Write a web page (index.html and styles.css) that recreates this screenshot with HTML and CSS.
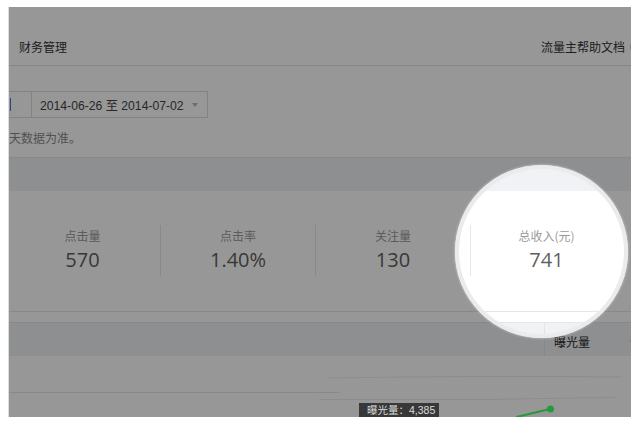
FILE: index.html
```html
<!DOCTYPE html>
<html lang="zh-CN">
<head>
<meta charset="utf-8">
<title>流量主</title>
<link rel="stylesheet" href="styles.css">
</head>
<body>
<div class="frame">
  <div class="page">
    <div class="nav">
      <span class="nav-item">财务管理</span>
      <span class="nav-help">流量主帮助文档<span class="help-icon"></span></span>
    </div>

    <div class="filter">
      <div class="seg seg-prev"><span class="seg-mark"></span></div>
      <div class="seg seg-date"><span class="date-text">2014-06-26 至 2014-07-02</span><span class="caret"></span></div>
    </div>

    <p class="note">天数据为准。</p>

    <div class="band"></div>

    <div class="stats">
      <div class="stat"><div class="stat-label">点击量</div><div class="stat-value">570</div></div>
      <div class="stat"><div class="stat-label">点击率</div><div class="stat-value">1.40%</div></div>
      <div class="stat"><div class="stat-label">关注量</div><div class="stat-value">130</div></div>
      <div class="stat stat-last"><div class="stat-label">总收入(元)</div><div class="stat-value">741</div></div>
    </div>

    <div class="divider"></div>

    <div class="band band-chart">
      <div class="metric"><span>曝光量</span><span class="caret caret-sm"></span></div>
    </div>

    <svg class="chart" width="622" height="61" viewBox="0 0 622 61">
      <line x1="0" y1="36.5" x2="330" y2="36.5" stroke="#e6e6e6" stroke-width="1"/>
      <path d="M318 22 Q470 19.5 612 21" fill="none" stroke="#ececec" stroke-width="1"/>
      <path d="M310 43.5 L480 43.5 Q560 42 606 41.5" fill="none" stroke="#ececec" stroke-width="1"/>
    </svg>

    <div class="lens"></div>

    <div class="tooltip">曝光量：4,385</div>
    <svg class="trend" width="50" height="20" viewBox="0 0 50 20">
      <line x1="7.5" y1="14" x2="41" y2="6" stroke="#27983b" stroke-width="2"/>
      <circle cx="41.5" cy="6" r="3.5" fill="#27983b"/>
    </svg>
  </div>
</div>
</body>
</html>
```

FILE: styles.css
```css
* { box-sizing: border-box; }

html, body {
  margin: 0;
  padding: 0;
  background: #ffffff;
}

body {
  padding: 7px 0 0 8px;
  font-family: "Liberation Sans", "Noto Sans CJK SC", sans-serif;
  font-size: 12px;
  color: #333;
}

.frame {
  width: 623px;
  height: 410px;
  border-left: 1px solid #dcdcdc;
}

.page {
  position: relative;
  width: 622px;
  height: 410px;
  overflow: hidden;
  background: #ffffff;
}

/* nav */
.nav {
  display: flex;
  align-items: center;
  height: 59px;
  padding-top: 22px;
  border-bottom: 1px solid #e4e4e4;
  font-family: "Noto Sans CJK SC", sans-serif;
  font-size: 12px;
  line-height: 16px;
  color: #333;
}

.nav-item {
  padding-left: 10px;
}

.nav-help {
  display: flex;
  align-items: center;
  margin-left: auto;
  margin-right: -13px;
}

.help-icon {
  width: 14px;
  height: 14px;
  margin-left: 5px;
  border: 1px solid #c8c8c8;
  border-radius: 50%;
}

/* filter */
.filter {
  display: flex;
  width: 219px;
  height: 27px;
  margin: 25px 0 0 -20px;
  border: 1px solid #dddddd;
}

.seg {
  display: flex;
  align-items: center;
  height: 100%;
}

.seg-prev {
  width: 42px;
  padding-left: 20px;
  border-right: 1px solid #dddddd;
}

.seg-mark {
  width: 1px;
  height: 13px;
  background: #3f78d0;
}

.seg-date {
  flex: 1;
  padding-left: 8px;
  font-size: 12.2px;
  color: #444;
}

.date-text {
  white-space: nowrap;
}

.caret {
  width: 0;
  height: 0;
  margin-left: auto;
  margin-right: 9px;
  border-left: 3.5px solid transparent;
  border-right: 3.5px solid transparent;
  border-top: 4px solid #b8b8b8;
}

.caret-sm {
  margin-right: 8px;
  border-left-width: 2.5px;
  border-right-width: 2.5px;
  border-top-width: 3px;
  border-top-color: #999;
}

.note {
  margin: 12px 0 0 0;
  font-family: "Noto Sans CJK SC", sans-serif;
  font-size: 12px;
  line-height: 16px;
  color: #8a8a8a;
}

/* bands */
.band {
  height: 34px;
  margin-top: 11px;
  border-top: 1px solid #e4e6e9;
  background: #f0f2f5;
}

/* stats */
.stats {
  display: flex;
  height: 51px;
  margin: 34px 0 0 -4px;
}

.stat {
  width: 155px;
  padding-top: 3px;
  text-align: center;
}

.stat + .stat {
  border-left: 1px solid #e8e8e8;
}

.stat-last {
  width: 152px;
}

.stat-label {
  font-family: "Noto Sans CJK SC", sans-serif;
  font-size: 12px;
  line-height: 16px;
  color: #9a9a9a;
}

.stat-value {
  margin-top: 3px;
  font-family: "Open Sans", "Noto Sans", sans-serif;
  font-size: 20px;
  line-height: 26px;
  color: #5f5f5f;
}

.divider {
  height: 1px;
  margin-top: 35px;
  background: #e6e6e6;
}

.band-chart {
  display: flex;
  justify-content: flex-end;
  margin-top: 10px;
}

.metric {
  display: flex;
  align-items: center;
  width: 98px;
  height: 100%;
  margin-right: -11px;
  padding: 3px 0 0 9px;
  border-left: 1px solid #e2e4e8;
  font-family: "Noto Sans CJK SC", sans-serif;
  font-size: 12px;
  color: #2a2a2a;
}

.chart {
  display: block;
}

/* spotlight overlay */
.lens {
  position: absolute;
  left: 446px;
  top: 158px;
  width: 173px;
  height: 173px;
  border-radius: 50%;
  border: 4px solid #ebebeb;
  box-shadow: 0 0 2px 1px rgba(200, 200, 200, 0.6), 0 0 0 1200px rgba(0, 0, 0, 0.408);
  z-index: 5;
}

.tooltip {
  position: absolute;
  left: 350px;
  top: 396px;
  width: 80px;
  height: 22px;
  padding: 1px 0 0 8px;
  background: #383838;
  color: #dcdcdc;
  font-family: "Liberation Sans", "Noto Sans CJK SC", sans-serif;
  font-size: 10.5px;
  line-height: 12px;
  white-space: nowrap;
  z-index: 6;
}

.trend {
  position: absolute;
  left: 500px;
  top: 396px;
  z-index: 6;
}
```
